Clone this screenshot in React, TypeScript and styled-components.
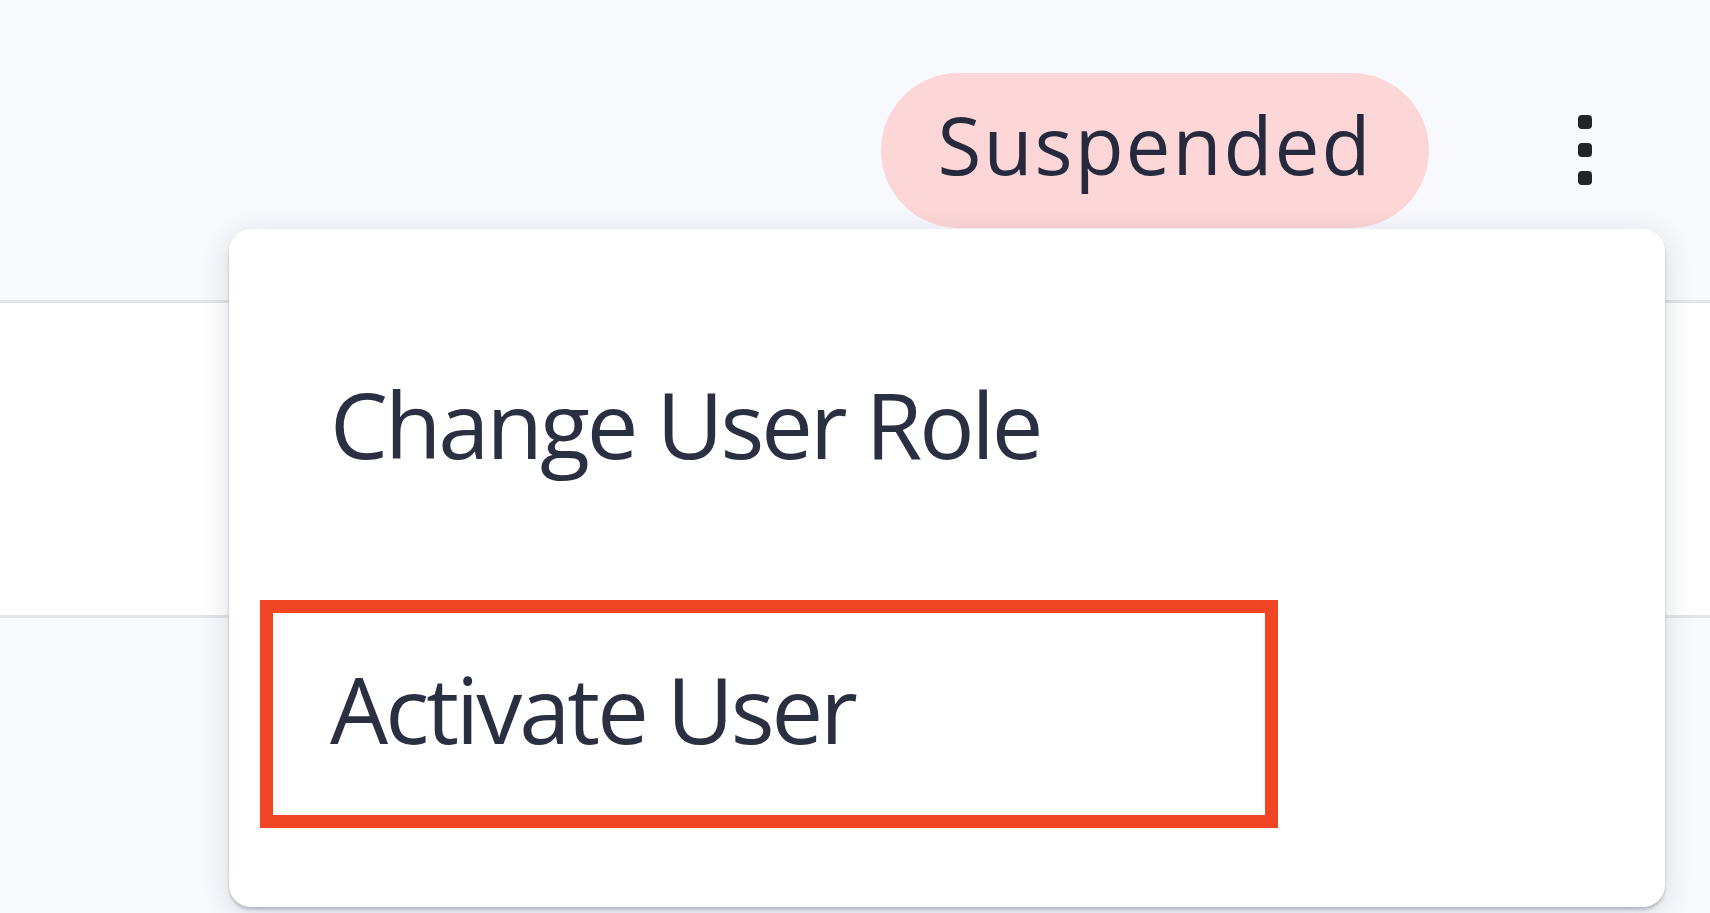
import React from "react";
import styled, { createGlobalStyle } from "styled-components";

const GlobalStyle = createGlobalStyle`
  html, body {
    margin: 0;
    padding: 0;
    background: #f8f9fd;
    overflow: hidden;
  }
  * {
    box-sizing: border-box;
  }
`;

const Page = styled.div`
  position: relative;
  width: 1710px;
  height: 913px;
  display: flex;
  flex-direction: column;
  background: #f8f9fd;
  font-family: "Open Sans", "Noto Sans", sans-serif;
`;

const Row = styled.div<{ $height: number; $bg: string; $border?: boolean }>`
  height: ${({ $height }) => $height}px;
  flex-shrink: 0;
  background: ${({ $bg }) => $bg};
  border-bottom: ${({ $border }) => ($border ? "3px solid #e3e4e9" : "none")};
  display: flex;
  align-items: center;
  justify-content: flex-end;
  gap: 142px;
  padding-right: 111px;
`;

const Filler = styled.div`
  flex: 1;
  background: #f8f9fd;
`;

const StatusBadge = styled.div`
  height: 155px;
  width: 548px;
  border-radius: 78px;
  background: #fdd6d7;
  color: #252a3f;
  font-family: "Open Sans", "Noto Sans", sans-serif;
  font-size: 80px;
  font-weight: 500;
  letter-spacing: 2px;
  display: flex;
  align-items: center;
  justify-content: center;
  padding-bottom: 14px;
`;

const KebabButton = styled.div`
  width: 28px;
  height: 70px;
  display: grid;
  place-items: center;
  cursor: pointer;
`;

const Menu = styled.div`
  position: absolute;
  left: 229px;
  top: 229px;
  width: 1436px;
  height: 678px;
  background: #ffffff;
  border-radius: 22px;
  box-shadow: 0 3px 3px rgba(40, 44, 60, 0.22),
    0 6px 28px rgba(40, 50, 90, 0.16);
  display: flex;
  flex-direction: column;
  padding-top: 52px;
`;

const MenuItem = styled.div`
  position: relative;
  height: 285px;
  display: flex;
  align-items: center;
  padding-left: 101px;
  color: #2b2f42;
  font-size: 92px;
  font-weight: 400;
  letter-spacing: -3px;
  white-space: nowrap;
  cursor: pointer;
`;

// red annotation frame drawn over the highlighted option
const Highlight = styled.div`
  position: absolute;
  left: 31px;
  top: 34px;
  width: 1018px;
  height: 228px;
  border: 13px solid #f04524;
  pointer-events: none;
`;

const Kebab = () => (
  <svg width="28" height="70" viewBox="0 0 28 70">
    <rect x="7" y="0" width="14" height="14" rx="4" fill="#222429" />
    <rect x="7" y="28" width="14" height="14" rx="4" fill="#222429" />
    <rect x="7" y="56" width="14" height="14" rx="4" fill="#222429" />
  </svg>
);

export default function App() {
  return (
    <>
      <GlobalStyle />
      <Page>
        <Row $height={303} $bg="#f8f9fd" $border>
          <StatusBadge>Suspended</StatusBadge>
          <KebabButton>
            <Kebab />
          </KebabButton>
        </Row>
        <Row $height={315} $bg="#ffffff" $border />
        <Filler />

        <Menu>
          <MenuItem>Change User Role</MenuItem>
          <MenuItem>
            Activate User
            <Highlight />
          </MenuItem>
        </Menu>
      </Page>
    </>
  );
}
